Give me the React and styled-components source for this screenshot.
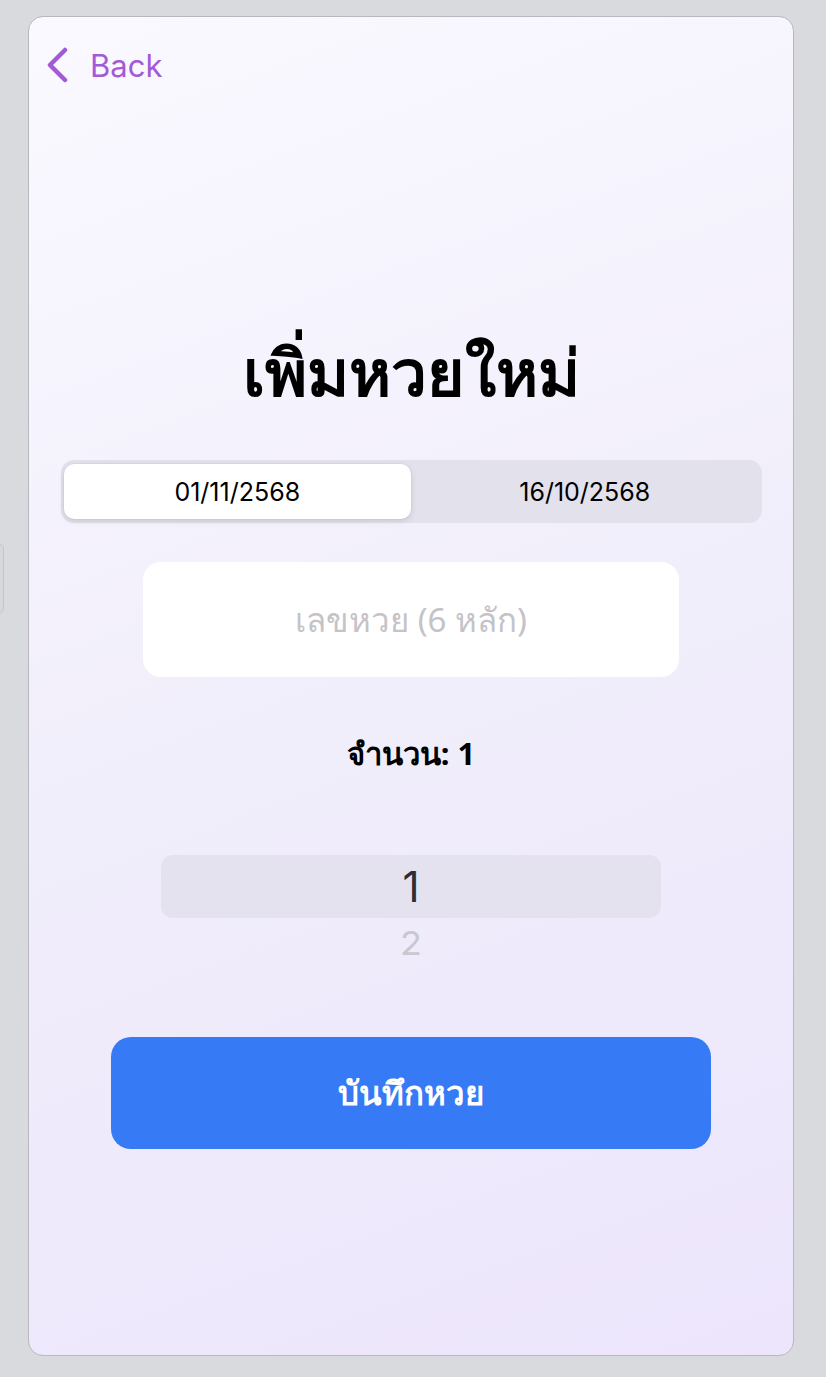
import React, { useState } from 'react';
import styled, { createGlobalStyle } from 'styled-components';

const GlobalStyle = createGlobalStyle`
  html, body {
    margin: 0;
    padding: 0;
    background: #d9dadd;
  }
  body {
    font-family: "Noto Sans", "Inter", "DejaVu Sans", sans-serif;
  }
`;

const Screen = styled.div`
  padding: 16px 0 21px 28px;
  position: relative;
`;

const EdgeTab = styled.div`
  position: absolute;
  left: -8px;
  top: 543px;
  width: 10px;
  height: 69px;
  border: 1px solid #c4c5c9;
  border-radius: 6px;
  background: #d6d7da;
`;

const Card = styled.div`
  width: 764px;
  height: 1338px;
  border: 1px solid #b9b8bf;
  border-radius: 15px;
  background: linear-gradient(160deg, #faf9ff 0%, #f1eefb 50%, #ece5fc 100%);
  display: flex;
  flex-direction: column;
  align-items: center;
  box-sizing: content-box;
  overflow: hidden;
`;

const TopBar = styled.div`
  align-self: stretch;
  display: flex;
  align-items: center;
  padding: 28px 0 0 16px;
  height: 40px;
`;

const BackButton = styled.button`
  display: flex;
  align-items: center;
  gap: 21px;
  border: none;
  background: none;
  padding: 0;
  color: #a35ad6;
  font-family: "Inter", "Noto Sans", sans-serif;
  font-size: 31px;
  cursor: pointer;
`;

const Title = styled.h1`
  margin: 245px 0 0;
  font-size: 64px;
  line-height: 84px;
  font-weight: 700;
  color: #000;
`;

const Segmented = styled.div`
  margin-top: 46px;
  width: 701px;
  height: 63px;
  box-sizing: border-box;
  padding: 4px 3px;
  border-radius: 13px;
  background: #e3e1eb;
  display: grid;
  grid-template-columns: 1fr 1fr;
`;

const Segment = styled.button`
  border: none;
  border-radius: 10px;
  font-family: "Inter", "Noto Sans", sans-serif;
  font-size: 25px;
  color: #000;
  background: ${(p) => (p.$active ? '#ffffff' : 'transparent')};
  box-shadow: ${(p) => (p.$active ? '0 2px 6px rgba(0,0,0,0.12), 0 0 0 0.5px rgba(0,0,0,0.04)' : 'none')};
  cursor: pointer;
`;

const NumberInput = styled.input`
  margin-top: 39px;
  width: 536px;
  height: 115px;
  box-sizing: border-box;
  border: none;
  border-radius: 18px;
  background: #ffffff;
  text-align: center;
  font-family: "Noto Sans", "Inter", sans-serif;
  font-size: 33px;
  color: #000;
  outline: none;

  &::placeholder {
    color: #c4c3c8;
  }
`;

const CountLabel = styled.div`
  margin-top: 55px;
  font-size: 31px;
  line-height: 42px;
  font-weight: 700;
  color: #000;
`;

const Wheel = styled.div`
  margin-top: 81px;
  width: 500px;
  display: flex;
  flex-direction: column;
  align-items: center;
`;

const WheelRow = styled.div`
  width: 100%;
  height: ${(p) => (p.$selected ? '63px' : '50px')};
  display: flex;
  align-items: center;
  justify-content: center;
  border-radius: 12px;
  background: ${(p) => (p.$selected ? '#e5e2ef' : 'transparent')};
  font-family: "Inter", "Noto Sans", sans-serif;
  font-size: ${(p) => (p.$selected ? '42px' : '36px')};
  color: ${(p) => (p.$selected ? '#2e2d33' : '#c9c7cf')};
  transform: ${(p) => (p.$selected ? 'none' : 'scaleY(0.9)')};
`;

const SaveButton = styled.button`
  margin-top: 69px;
  width: 600px;
  height: 112px;
  border: none;
  border-radius: 20px;
  background: #367af5;
  color: #fff;
  font-family: "Noto Sans", "Inter", sans-serif;
  font-size: 33px;
  font-weight: 700;
  cursor: pointer;
`;

const Chevron = () => (
  <svg width="24" height="36" viewBox="0 0 24 36" fill="none">
    <path d="M20 3 L5 18 L20 33" stroke="#a35ad6" strokeWidth="4.5" strokeLinecap="round" strokeLinejoin="round" />
  </svg>
);

export default function App() {
  const [date, setDate] = useState(0);
  const dates = ['01/11/2568', '16/10/2568'];
  return (
    <>
      <GlobalStyle />
      <Screen>
        <EdgeTab />
        <Card>
          <TopBar>
            <BackButton>
              <Chevron />
              Back
            </BackButton>
          </TopBar>
          <Title>เพิ่มหวยใหม่</Title>
          <Segmented>
            {dates.map((d, i) => (
              <Segment key={d} $active={date === i} onClick={() => setDate(i)}>
                {d}
              </Segment>
            ))}
          </Segmented>
          <NumberInput placeholder="เลขหวย (6 หลัก)" />
          <CountLabel>จำนวน: 1</CountLabel>
          <Wheel>
            <WheelRow $selected>1</WheelRow>
            <WheelRow>2</WheelRow>
          </Wheel>
          <SaveButton>บันทึกหวย</SaveButton>
        </Card>
      </Screen>
    </>
  );
}
